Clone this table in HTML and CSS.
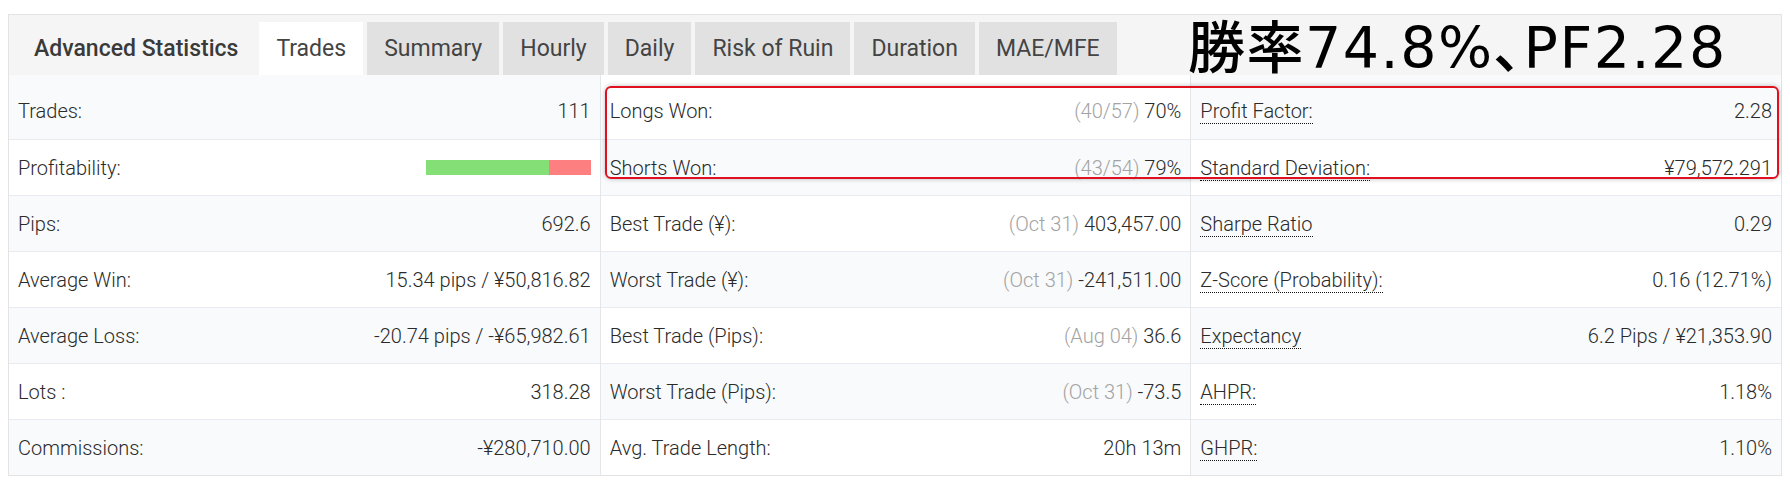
FILE: index.html
```html
<!DOCTYPE html>
<html lang="ja">
<head>
<meta charset="utf-8">
<title>Advanced Statistics</title>
<link rel="stylesheet" href="styles.css">
</head>
<body>
<div class="stats">
  <div class="stats-head">
    <div class="stats-title">Advanced Statistics</div>
    <div class="tabs">
      <div class="tab active">Trades</div>
      <div class="tab">Summary</div>
      <div class="tab">Hourly</div>
      <div class="tab">Daily</div>
      <div class="tab">Risk of Ruin</div>
      <div class="tab">Duration</div>
      <div class="tab">MAE/MFE</div>
    </div>
    <div class="note">勝率74.8%、PF2.28</div>
  </div>
  <div class="grid">
    <div class="col col-a">
      <div class="row"><span class="label">Trades:</span><span class="value">111</span></div>
      <div class="row"><span class="label">Profitability:</span><span class="bar"><span class="bar-win" style="width:75%"></span><span class="bar-loss"></span></span></div>
      <div class="row"><span class="label">Pips:</span><span class="value">692.6</span></div>
      <div class="row"><span class="label">Average Win:</span><span class="value">15.34 pips / ¥50,816.82</span></div>
      <div class="row"><span class="label">Average Loss:</span><span class="value">-20.74 pips / -¥65,982.61</span></div>
      <div class="row"><span class="label">Lots :</span><span class="value">318.28</span></div>
      <div class="row"><span class="label">Commissions:</span><span class="value">-¥280,710.00</span></div>
    </div>
    <div class="col col-b">
      <div class="row"><span class="label">Longs Won:</span><span class="value"><span class="muted">(40/57)</span> 70%</span></div>
      <div class="row"><span class="label">Shorts Won:</span><span class="value"><span class="muted">(43/54)</span> 79%</span></div>
      <div class="row"><span class="label">Best Trade (¥):</span><span class="value"><span class="muted">(Oct 31)</span> 403,457.00</span></div>
      <div class="row"><span class="label">Worst Trade (¥):</span><span class="value"><span class="muted">(Oct 31)</span> -241,511.00</span></div>
      <div class="row"><span class="label">Best Trade (Pips):</span><span class="value"><span class="muted">(Aug 04)</span> 36.6</span></div>
      <div class="row"><span class="label">Worst Trade (Pips):</span><span class="value"><span class="muted">(Oct 31)</span> -73.5</span></div>
      <div class="row"><span class="label">Avg. Trade Length:</span><span class="value">20h 13m</span></div>
    </div>
    <div class="col col-a">
      <div class="row"><span class="label"><span class="dotted">Profit Factor:</span></span><span class="value">2.28</span></div>
      <div class="row"><span class="label"><span class="dotted">Standard Deviation:</span></span><span class="value">¥79,572.291</span></div>
      <div class="row"><span class="label"><span class="dotted">Sharpe Ratio</span></span><span class="value">0.29</span></div>
      <div class="row"><span class="label"><span class="dotted">Z-Score (Probability):</span></span><span class="value">0.16 (12.71%)</span></div>
      <div class="row"><span class="label"><span class="dotted">Expectancy</span></span><span class="value">6.2 Pips / ¥21,353.90</span></div>
      <div class="row"><span class="label"><span class="dotted">AHPR:</span></span><span class="value">1.18%</span></div>
      <div class="row"><span class="label"><span class="dotted">GHPR:</span></span><span class="value">1.10%</span></div>
    </div>
    <div class="highlight"></div>
  </div>
</div>
</body>
</html>
```

FILE: styles.css
```css
html, body {
  background: #ffffff;
}
body {
  margin: 14px 8px 8px 8px;
  font-family: Roboto, "Liberation Sans", "Noto Sans CJK JP", sans-serif;
  color: #333333;
}
.stats {
  border: 1px solid #e3e3e3;
}
.stats-head {
  position: relative;
  display: flex;
  align-items: stretch;
  height: 60px;
  box-sizing: border-box;
  padding-top: 7px;
  background: #f5f5f5;
}
.stats-title {
  display: flex;
  align-items: center;
  padding-left: 25px;
  margin-right: 21px;
  font-size: 23px;
  font-weight: 500;
  color: #3a3a3a;
}
.tabs {
  display: flex;
  gap: 4px;
}
.tab {
  display: flex;
  align-items: center;
  padding: 0 17px;
  font-size: 23px;
  color: #444444;
  background: #e1e1e1;
}
.tab.active {
  background: #ffffff;
}
.note {
  position: absolute;
  left: 1179px;
  top: 5px;
  font-family: "DejaVu Sans", "Noto Sans CJK JP", sans-serif;
  font-feature-settings: "palt";
  font-size: 57px;
  font-weight: 500;
  line-height: 1;
  letter-spacing: 1.5px;
  color: #000000;
  white-space: nowrap;
}
.grid {
  position: relative;
  display: grid;
  grid-template-columns: 1fr 1fr 1fr;
}
.col {
  padding-top: 8px;
}
.col + .col {
  border-left: 1px solid #e4e7ea;
}
.col-a {
  background: #f8fafc;
}
.col-b {
  background: #ffffff;
}
.row {
  display: flex;
  align-items: center;
  justify-content: space-between;
  height: 56px;
  box-sizing: border-box;
  padding: 0 9px;
  font-size: 20px;
  font-weight: 300;
  color: #2a2a2a;
}
.row + .row {
  border-top: 1px solid #e8ebef;
}
.col-a .row:nth-child(odd),
.col-b .row:nth-child(even) {
  background: #f8fafc;
}
.col-a .row:nth-child(even),
.col-b .row:nth-child(odd) {
  background: #ffffff;
}
.col:last-of-type .row {
  padding-right: 11px;
}
.value {
  white-space: nowrap;
}
.muted {
  color: #a3a3a3;
}
.dotted {
  border-bottom: 1px dotted #111111;
}
.bar {
  display: flex;
  width: 165px;
  height: 15px;
}
.bar-win {
  background: #85df77;
}
.bar-loss {
  flex: 1;
  background: #fe7f7f;
}
.highlight {
  position: absolute;
  left: 596px;
  top: 11px;
  width: 1174px;
  height: 93px;
  box-sizing: border-box;
  border: 2px solid #e1101f;
  border-radius: 6px;
  box-shadow: 0 0 5px rgba(0, 0, 0, 0.25);
  pointer-events: none;
}
```
